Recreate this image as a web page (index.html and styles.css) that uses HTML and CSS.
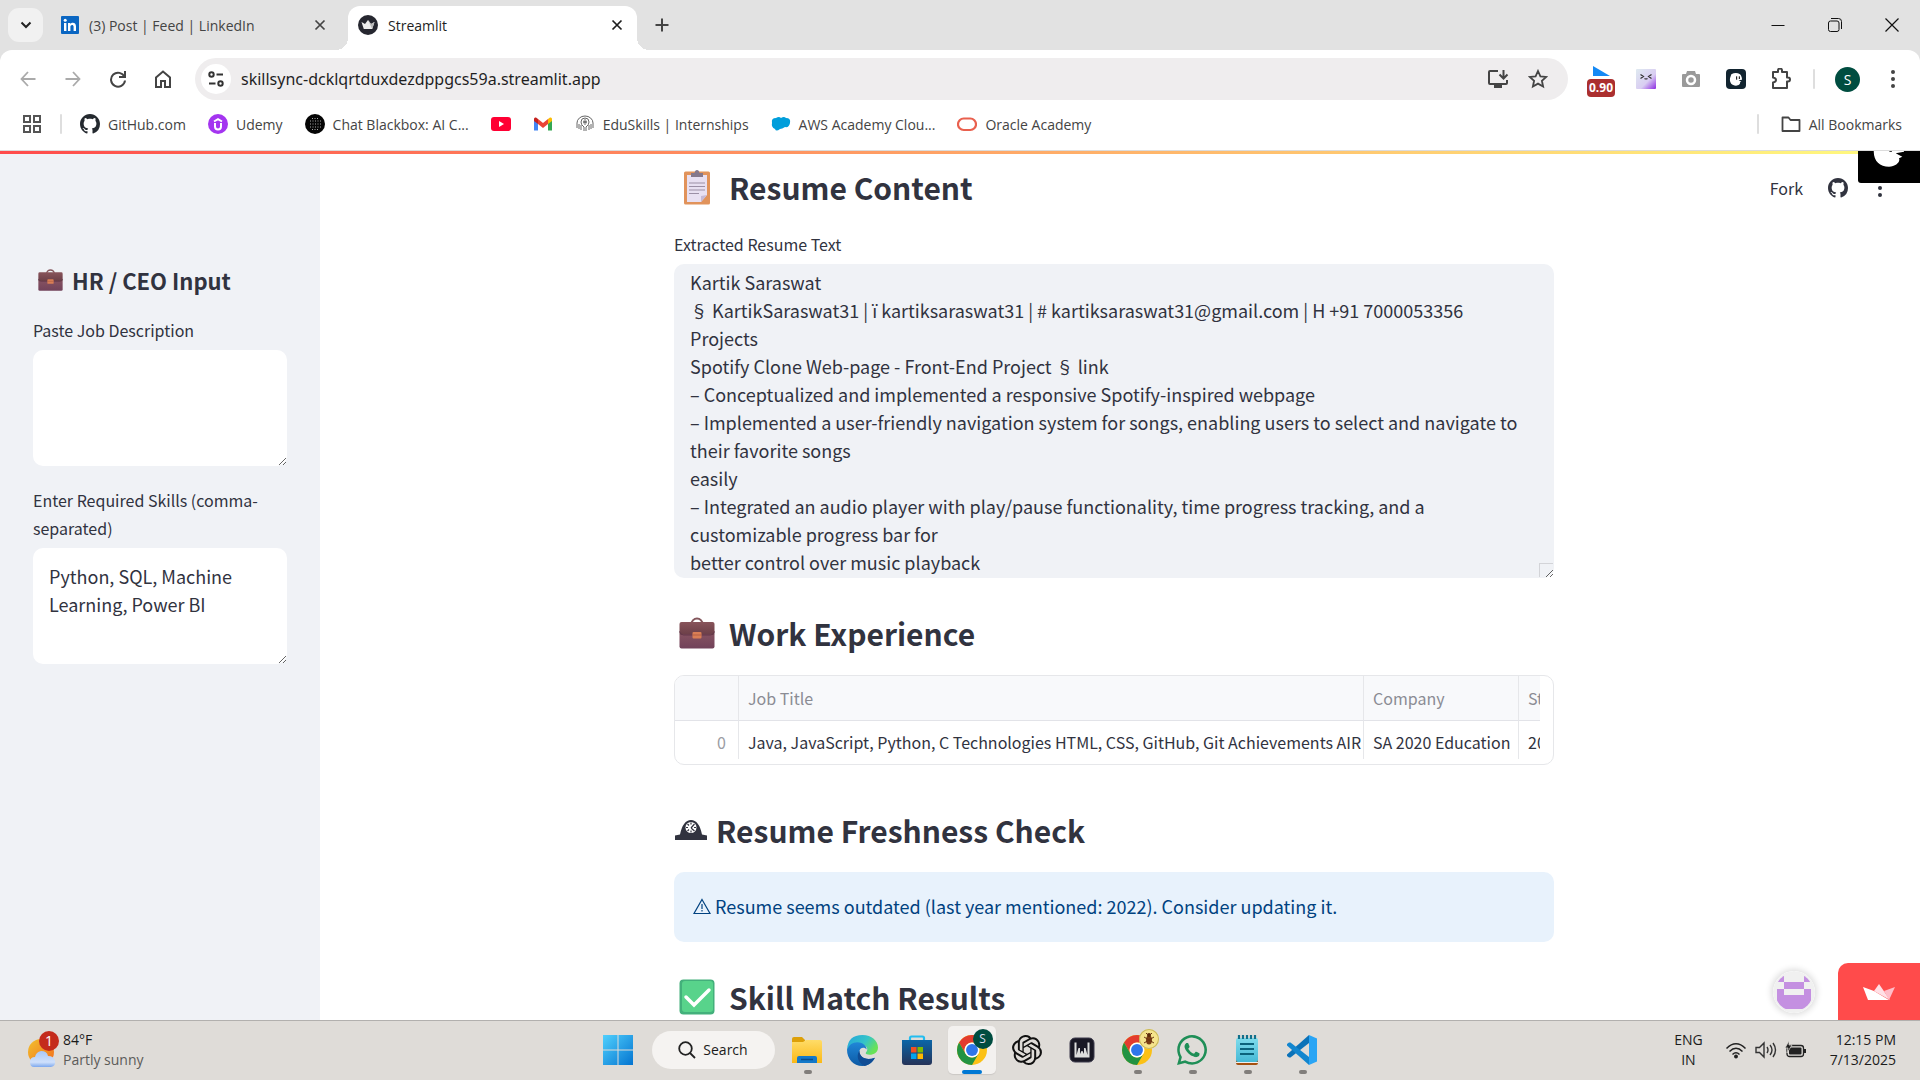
FILE: index.html
```html
<!DOCTYPE html>
<html lang="en">
<head>
<meta charset="utf-8">
<title>Streamlit</title>
<link rel="stylesheet" href="styles.css">
</head>
<body>
<svg class="defs" aria-hidden="true">
  <defs>
    <linearGradient id="case" x1="0" y1="0" x2="0" y2="1"><stop offset="0" stop-color="#88545a"/><stop offset=".45" stop-color="#6d4049"/><stop offset=".5" stop-color="#835060"/><stop offset="1" stop-color="#71425a"/></linearGradient>
    <linearGradient id="win" x1="0" y1="0" x2="1" y2="1"><stop offset="0" stop-color="#50d0fd"/><stop offset="1" stop-color="#0474d0"/></linearGradient>
    <linearGradient id="folder" x1="0" y1="0" x2="0" y2="1"><stop offset="0" stop-color="#ffdc68"/><stop offset="1" stop-color="#fbb916"/></linearGradient>
    <linearGradient id="edgeTop" x1="0" y1="0" x2="1" y2=".5"><stop offset="0" stop-color="#23a4dc"/><stop offset=".6" stop-color="#35c4c8"/><stop offset="1" stop-color="#68e257"/></linearGradient>
    <linearGradient id="edgeLow" x1="0" y1="0" x2="0" y2="1"><stop offset="0" stop-color="#2087d8"/><stop offset="1" stop-color="#0c59a4"/></linearGradient>
    <linearGradient id="bag" x1="0" y1="0" x2="0" y2="1"><stop offset="0" stop-color="#0b66a8"/><stop offset="1" stop-color="#253358"/></linearGradient>
    <linearGradient id="sun" x1="0" y1="0" x2="1" y2="1"><stop offset="0" stop-color="#f2c12e"/><stop offset="1" stop-color="#f26b1d"/></linearGradient>
    <linearGradient id="cloud" x1="0" y1="0" x2="0" y2="1"><stop offset="0" stop-color="#a8c8f8"/><stop offset=".7" stop-color="#cfe0fb"/><stop offset="1" stop-color="#7da8ee"/></linearGradient>
    <linearGradient id="face" x1="0" y1="0" x2="1" y2="1"><stop offset="0" stop-color="#dfeaf0"/><stop offset=".6" stop-color="#d9cdf2"/><stop offset="1" stop-color="#8d2be2"/></linearGradient>
    <linearGradient id="pad" x1="0" y1="0" x2="0" y2="1"><stop offset="0" stop-color="#7fdcec"/><stop offset="1" stop-color="#45b9d6"/></linearGradient>
    <symbol id="github" viewBox="0 0 16 16"><path d="M8 0C3.58 0 0 3.58 0 8c0 3.54 2.29 6.53 5.47 7.59.4.07.55-.17.55-.38 0-.19-.01-.82-.01-1.49-2.01.37-2.53-.49-2.69-.94-.09-.23-.48-.94-.82-1.13-.28-.15-.68-.52-.01-.53.63-.01 1.08.58 1.23.82.72 1.21 1.87.87 2.33.66.07-.52.28-.87.51-1.07-1.78-.2-3.64-.89-3.64-3.95 0-.87.31-1.59.82-2.15-.08-.2-.36-1.02.08-2.12 0 0 .67-.21 2.2.82.64-.18 1.32-.27 2-.27s1.36.09 2 .27c1.53-1.04 2.2-.82 2.2-.82.44 1.1.16 1.92.08 2.12.51.56.82 1.27.82 2.15 0 3.07-1.87 3.75-3.65 3.95.29.25.54.73.54 1.48 0 1.07-.01 1.93-.01 2.2 0 .21.15.46.55.38A8.01 8.01 0 0 0 16 8c0-4.42-3.58-8-8-8z"/></symbol>
    <symbol id="briefcase" viewBox="0 0 36 32"><path d="M12.500 7a5 5 0 0 1 11 0" fill="none" stroke="#84565c" stroke-width="2"/><rect x=".5" y="5" width="35" height="26.500" rx="2" fill="url(#case)"/><path d="M.5 14.500q1 3.500 4 3.500h27q3 0 4-3.500" fill="none" stroke="#63374a"/><rect x="13.500" y="15" width="9" height="6.500" rx="1" fill="#d97e55"/><path d="M13.500 18h9" stroke="#b55f45"/></symbol>
    <symbol id="chrome" viewBox="0 0 48 48"><circle cx="24" cy="24" r="24" fill="#fbc116"/><path d="M3.220 12A24 24 0 0 1 44.780 12H24a12 12 0 0 0-10.390 18z" fill="#e33b2e"/><path d="M3.220 12A24 24 0 0 0 24 48l10.390-18A12 12 0 0 1 13.610 30z" fill="#229342"/><circle cx="24" cy="24" r="12" fill="#fff"/><circle cx="24" cy="24" r="9.500" fill="#2f76ea"/></symbol>
    <symbol id="dots" viewBox="0 0 20 20"><circle cx="10" cy="3" r="2"/><circle cx="10" cy="10" r="2"/><circle cx="10" cy="17" r="2"/></symbol>
    <symbol id="cross" viewBox="0 0 12 12"><path d="M1.500 1.500l9 9m0-9l-9 9" fill="none" stroke="currentColor" stroke-width="1.700"/></symbol>
    <symbol id="bot" viewBox="0 0 24 24"><path d="M5 5q7-4 13 0c2 2 3 5 3 8l-5 1 4 2-2 1c1 2-2 5-6 5C6 22 2 18 3 11z" fill="#fff"/><path d="M13 8v5m4-5v4" stroke="#000" stroke-width="1.500"/></symbol>
  </defs>
</svg>

<header class="browser">
  <div class="tabstrip">
    <button class="tab-search" aria-label="Search tabs"><svg width="12" height="8" viewBox="0 0 12 8"><path d="M1.500 1.500L6 6l4.500-4.500" fill="none" stroke="#222" stroke-width="2"/></svg></button>
    <div class="tab">
      <svg width="18" height="18" viewBox="0 0 18 18"><rect width="18" height="18" rx="1" fill="#0a66c2"/><circle cx="4.200" cy="4.200" r="1.500" fill="#fff"/><path d="M3 7h2.400v8H3zM7 7h2.300v1.100C10.700 6 15 6.200 15 10.300V15h-2.400v-4.200c0-2.700-3.200-2.400-3.200 0V15H7z" fill="#fff"/></svg>
      <span class="tab-title">(3) Post | Feed | LinkedIn</span>
      <button class="tab-close" aria-label="Close tab"><svg width="12" height="12"><use href="#cross"/></svg></button>
    </div>
    <div class="tab tab-active">
      <svg width="20" height="20" viewBox="0 0 20 20"><circle cx="10" cy="10" r="10" fill="#262730"/><path d="M3.500 7l3.500 2L10 5l3 4 3.500-2-2.300 7H5.800z" fill="#eee"/><path d="M10 5l3 4 3.500-2-2.300 7z" fill="#bbb"/></svg>
      <span class="tab-title">Streamlit</span>
      <button class="tab-close" aria-label="Close tab"><svg width="12" height="12"><use href="#cross"/></svg></button>
    </div>
    <button class="new-tab" aria-label="New tab"><svg width="14" height="14" viewBox="0 0 14 14"><path d="M7 .5v13M.5 7h13" stroke="#444" stroke-width="2"/></svg></button>
    <div class="window-buttons">
      <button aria-label="Minimize"><svg width="14" height="14" viewBox="0 0 14 14"><path d="M.5 7.500h13" stroke="#111"/></svg></button>
      <button aria-label="Restore"><svg width="14" height="14" viewBox="0 0 14 14" fill="none" stroke="#111"><rect x=".5" y="3" width="10.500" height="10.500" rx="2"/><path d="M3 .5h7.500a3 3 0 0 1 3 3V11"/></svg></button>
      <button aria-label="Close"><svg width="14" height="14" viewBox="0 0 14 14"><path d="M.5.5l13 13m0-13l-13 13" stroke="#111" stroke-width="1.200"/></svg></button>
    </div>
  </div>

  <div class="toolbar">
    <button class="tool" aria-label="Back"><svg width="16" height="16" viewBox="0 0 16 16" fill="none" stroke="#aaa" stroke-width="1.800"><path d="M15.500 8H1.500M8 1L1.500 8 8 15"/></svg></button>
    <button class="tool" aria-label="Forward"><svg width="16" height="16" viewBox="0 0 16 16" fill="none" stroke="#aaa" stroke-width="1.800"><path d="M.5 8h14M8 1l6.500 7L8 15"/></svg></button>
    <button class="tool" aria-label="Reload"><svg width="18" height="18" viewBox="0 0 18 18" fill="none" stroke="#444" stroke-width="2"><path d="M15.500 7A7 7 0 1 0 16 10.500M16 1v6h-6"/></svg></button>
    <button class="tool" aria-label="Home"><svg width="18" height="18" viewBox="0 0 18 18" fill="none" stroke="#444" stroke-width="2"><path d="M2 7.500L9 1.500l7 6V17h-5v-6H7v6H2z"/></svg></button>
    <div class="address">
      <button class="site-info" aria-label="Site information"><svg width="16" height="16" viewBox="0 0 16 16" fill="none" stroke="#333" stroke-width="2"><circle cx="3.500" cy="3.500" r="2.200"/><path d="M8.500 3.500H15M1 12.500h6.500"/><circle cx="12.500" cy="12.500" r="2.200"/></svg></button>
      <input class="url" aria-label="Address" value="skillsync-dcklqrtduxdezdppgcs59a.streamlit.app">
      <button class="in-address" aria-label="Install app"><svg width="22" height="20" viewBox="0 0 22 20" fill="none" stroke="#444" stroke-width="2"><path d="M11 2H3q-1 0-1 1v11q0 1 1 1h16q1 0 1-1v-3M16.500 1v8m-4-3.500l4 4 4-4"/><path d="M7 17.500h8" stroke-width="3"/></svg></button>
      <button class="in-address" aria-label="Bookmark this page"><svg width="20" height="20" viewBox="0 0 20 20"><path d="M10 2l2.400 5.300 5.800.6-4.300 3.900 1.200 5.700L10 14.600l-5.100 2.900 1.200-5.700L1.800 7.900l5.800-.6z" fill="none" stroke="#444" stroke-width="1.800"/></svg></button>
    </div>
    <button class="tool badge-host" aria-label="Playback speed"><svg width="18" height="18" viewBox="0 0 18 18"><path d="M1 0l17 10H1z" fill="#1489f5"/></svg><span class="speed">0.90</span></button>
    <button class="tool" aria-label="Extension"><svg width="20" height="20" viewBox="0 0 20 20"><rect width="20" height="20" rx="1" fill="url(#face)"/><path d="M4.500 5.500l3 2-3 2M15.500 5.500l-3 2 3 2M8.500 9.500q1.500 1 3 0" fill="none" stroke="#333" stroke-width="1.200"/></svg></button>
    <button class="tool" aria-label="Screenshot"><svg width="20" height="20" viewBox="0 0 20 20"><path d="M2 5h3l1-3h8l1 3h3q1 0 1 1v11q0 1-1 1H2q-1 0-1-1V6q0-1 1-1z" fill="#9a9a9a"/><circle cx="10" cy="11" r="4" fill="none" stroke="#fff" stroke-width="2.500"/></svg></button>
    <button class="tool" aria-label="Assistant"><svg width="20" height="20" viewBox="0 0 20 20"><rect width="20" height="20" rx="4" fill="#122430"/><svg x="2" y="2" width="16" height="16"><use href="#bot"/></svg></svg></button>
    <button class="tool" aria-label="Extensions"><svg width="22" height="22" viewBox="0 0 22 22"><path d="M3 4h5V2.500a2 2 0 0 1 4 0V4h5v5.500h1a2 2 0 0 1 0 4h-1V20H3v-5.500q3-.5 3-2.500T3 9.500z" fill="none" stroke="#444" stroke-width="2" stroke-linejoin="round"/></svg></button>
    <span class="rule"></span>
    <button class="tool" aria-label="Profile"><span class="profile">S</span></button>
    <button class="tool" aria-label="Menu"><svg width="20" height="20" fill="#444"><use href="#dots"/></svg></button>
  </div>

  <nav class="bookmarks">
    <button class="apps" aria-label="Apps"><svg width="18" height="18" viewBox="0 0 18 18" fill="none" stroke="#555" stroke-width="2"><path d="M1 1h6v6H1zM11 1h6v6h-6zM1 11h6v6H1zM11 11h6v6h-6z"/></svg></button>
    <span class="rule"></span>
    <a href="#"><svg width="20" height="20" fill="#24292f"><use href="#github"/></svg>GitHub.com</a>
    <a href="#"><svg width="20" height="20" viewBox="0 0 20 20"><circle cx="10" cy="10" r="10" fill="#a435f0"/><path d="M6 7.500l4-2.300 4 2.300M7 9v3.500q0 3 3 3t3-3V9" fill="none" stroke="#fff" stroke-width="2"/></svg>Udemy</a>
    <a href="#"><svg width="20" height="20" viewBox="0 0 20 20"><circle cx="10" cy="10" r="10" fill="#050505"/><path d="M5 7h11M5 10h11M5 13h11M7 4.500h7M7 15.500h7" stroke="#aaa" stroke-dasharray="1 1.500"/></svg>Chat Blackbox: AI C...</a>
    <a href="#" aria-label="YouTube"><svg width="20" height="20" viewBox="0 0 20 20"><rect y="3" width="20" height="14" rx="3" fill="#ff0033"/><path d="M8 7l5 3-5 3z" fill="#fff"/></svg></a>
    <a href="#" aria-label="Gmail"><svg width="20" height="20" viewBox="0 0 20 20"><path d="M1 5v11.500h4V8z" fill="#4285f4"/><path d="M19 5v11.500h-4V8z" fill="#34a853"/><path d="M5 5l5 4 5-4v5l-5 4-5-4z" fill="#ea4335"/><path d="M1 5q0-2 2-1.500L5 5v5L1 7z" fill="#c5221f"/><path d="M19 5q0-2-2-1.500L15 5v5l4-3z" fill="#fbbc04"/></svg></a>
    <a href="#"><svg width="20" height="20" viewBox="0 0 20 20" fill="none" stroke="#666"><path d="M2 14V9a8 7 0 0 1 16 0v5M4 15V10m12 5v-5M6 16v-5m8 5v-5M9 17v-4q-3-2-3-5 0-4 4-4t4 4q0 3-3 5v4M10 5v6M8 7l4 2m0-2L8 9"/></svg>EduSkills | Internships</a>
    <a href="#"><svg width="20" height="20" viewBox="0 0 20 20"><path d="M1 9q-1-5 4-5 3-2 5 0 3-2 5 0 5 0 4 5-1 5-5 4-3 2-5 2-4 3-5 0-4-2-3-6z" fill="#009edb"/></svg>AWS Academy Clou...</a>
    <a href="#"><svg width="20" height="20" viewBox="0 0 20 20"><rect x="1" y="4.500" width="18" height="11.500" rx="5.700" fill="none" stroke="#e9604e" stroke-width="2.200"/></svg>Oracle Academy</a>
    <span class="rule rule-end"></span>
    <a href="#"><svg width="20" height="20" viewBox="0 0 20 20"><path d="M1.500 3.500h6l2 2.500h9v11h-17z" fill="none" stroke="#444" stroke-width="1.800" stroke-linejoin="round"/></svg>All Bookmarks</a>
  </nav>
</header>

<div class="page">
  <div class="stripe"></div>
  <aside class="sidebar">
    <h2 class="side-title"><svg class="case-small"><use href="#briefcase"/></svg>HR / CEO Input</h2>
    <div class="field">
      <label for="job">Paste Job Description</label>
      <textarea id="job" class="side-area"></textarea>
    </div>
    <div class="field">
      <label for="skills">Enter Required Skills (comma-separated)</label>
      <textarea id="skills" class="side-area">Python, SQL, Machine Learning, Power BI</textarea>
    </div>
  </aside>

  <main class="main">
    <div class="content">
      <section class="resume">
        <h2 class="title"><svg class="emoji" viewBox="0 0 36 36"><rect x="5" y="2.500" width="26" height="33" rx="1.500" fill="#e1935b"/><path d="M8 6h20v20l-6 7H8z" fill="#e8e0f2"/><path d="M22 33v-6l6-1z" fill="#c6b9d5"/><path d="M12 8V4h3.500q.5-3 2.500-3t2.500 3H24v4z" fill="#85788c"/><path d="M10 14h16M10 17.500h16M10 21h16M10 24.500h10" stroke="#9b8fa6" stroke-width="1.200"/></svg>Resume Content</h2>
        <div class="field">
          <label for="resume">Extracted Resume Text</label>
          <div class="area-wrap">
          <textarea id="resume" class="resume-area">Kartik Saraswat
§ KartikSaraswat31 | ï kartiksaraswat31 | # kartiksaraswat31@gmail.com | H +91 7000053356
Projects
Spotify Clone Web-page - Front-End Project § link
– Conceptualized and implemented a responsive Spotify-inspired webpage
– Implemented a user-friendly navigation system for songs, enabling users to select and navigate to their favorite songs
easily
– Integrated an audio player with play/pause functionality, time progress tracking, and a customizable progress bar for
better control over music playback</textarea>
          </div>
        </div>
      </section>

      <section class="work">
        <h2 class="title"><svg class="emoji"><use href="#briefcase"/></svg>Work Experience</h2>
        <div class="frame">
          <div class="clip">
            <table class="grid">
              <colgroup><col class="col-index"><col><col class="col-company"><col class="col-start"></colgroup>
              <thead><tr><th></th><th>Job Title</th><th>Company</th><th>Start</th></tr></thead>
              <tbody><tr><td class="index">0</td><td>Java, JavaScript, Python, C Technologies HTML, CSS, GitHub, Git Achievements AIR 760</td><td>SA 2020 Education</td><td>2020</td></tr></tbody>
            </table>
          </div>
        </div>
      </section>

      <section class="fresh">
        <h2 class="title title-tight"><svg class="clock" viewBox="0 0 32 20"><path d="M0 20v-4.500l5-1Q8 0 16 0t11 14.500l5 1V20z" fill="#31333f"/><circle cx="16" cy="7.500" r="5.500" fill="#fff"/><path d="M16 2.500v2m0 8v-2M11 7.500h2m8 0h-2M12.500 4l1.500 1.500M19.500 4L16 8m-3.500 3l1.500-1.500m5.500 1.500L16 8" stroke="#31333f" stroke-width="1.200"/></svg>Resume Freshness Check</h2>
        <div class="alert"><svg width="18" height="17" viewBox="0 0 18 17" fill="none" stroke="#004280" stroke-width="1.200"><path d="M9 1.500L17 15.500H1zM9 6v5m0 1v1.500"/></svg>Resume seems outdated (last year mentioned: 2022). Consider updating it.</div>
      </section>

      <section>
        <h2 class="title"><svg class="emoji" viewBox="0 0 36 36"><rect x=".5" y=".5" width="35" height="35" rx="4" fill="#43b07b"/><rect x="3" y="2" width="31" height="31" rx="3" fill="#58d38b"/><path d="M7 18l8 8 15-15" fill="none" stroke="#fff" stroke-width="3.500" stroke-linecap="round"/></svg>Skill Match Results</h2>
      </section>
    </div>
  </main>

  <div class="page-menu">
    <a href="#">Fork</a>
    <a href="#" aria-label="GitHub"><svg width="20" height="20" fill="#31333f"><use href="#github"/></svg></a>
    <button aria-label="App menu"><svg width="20" height="20" fill="#31333f"><use href="#dots"/></svg></button>
  </div>
  <div class="corner-bot"><svg width="40" height="40"><use href="#bot"/></svg></div>
  <div class="host-badges">
    <svg class="creator" width="42" height="42" viewBox="0 0 42 42"><defs><clipPath id="round"><circle cx="21" cy="21" r="19"/></clipPath></defs><circle cx="21" cy="21" r="21" fill="#f0f0f0"/><g clip-path="url(#round)" fill="#c490e1"><path d="M4 4h7v7H4zM31 4h7v7h-7zM11 11h20v7H11zM4 18h7v6h20v-6h7v20H4z"/></g></svg>
    <a class="crown" href="#" aria-label="Hosted with Streamlit"><svg width="34" height="18" viewBox="0 0 34 18"><path d="M1 4l11 4 15 9H6z" fill="#fff"/><path d="M12 8l5-7 11 16z" fill="#ffe0e6"/><path d="M22 8l11-4-6 13z" fill="#ffbdc8"/></svg></a>
  </div>
</div>

<footer class="taskbar">
  <div class="weather">
    <svg width="34" height="38" viewBox="0 0 34 38"><circle cx="14" cy="22" r="13" fill="url(#sun)"/><path d="M7 37q-4 0-4-5t5-5q1-5 6-6 6 0 7 5 6 0 7 5t-4 6z" fill="url(#cloud)"/><circle cx="22" cy="11" r="10" fill="#c42b1c"/><text x="22" y="16" class="count">1</text></svg>
    <div><div>84°F</div><div class="muted">Partly sunny</div></div>
  </div>
  <div class="dock">
    <button class="app" aria-label="Start"><svg width="30" height="30" viewBox="0 0 30 30"><path d="M0 0h14.500v14.500H0zM15.500 0H30v14.500H15.500zM0 15.500h14.500V30H0zM15.500 15.500H30V30H15.500z" fill="url(#win)"/></svg></button>
    <button class="search"><svg width="18" height="18" viewBox="0 0 18 18" fill="none" stroke="#222" stroke-width="1.800"><circle cx="7.500" cy="7.500" r="6.300"/><path d="M12 12l5 5"/></svg>Search</button>
    <button class="app running" aria-label="File Explorer"><svg width="30" height="30" viewBox="0 0 30 30"><path d="M0 4q0-2 2-2h8l3 3v5H0z" fill="#dda009"/><path d="M0 7h11l3-2h14q2 0 2 2v21H0z" fill="url(#folder)"/><path d="M5 28v-5q0-2 2-2h16q2 0 2 2v5z" fill="#1479c9"/><path d="M9 24.500h12" stroke="#0b4e8c" stroke-width="1.500"/></svg></button>
    <button class="app" aria-label="Edge"><svg width="31" height="31" viewBox="0 0 30 30"><path d="M0 14Q1 0 15 0c9 0 15 6 15 12 0 5-4 7-8 7-5 0-4-2-3-3q2-3-2-6Q10 5 0 14z" fill="url(#edgeTop)"/><path d="M0 14Q3 7 10 7c6 0 9 4 9 7-2-3-7-2-7 2 0 6 7 9 15 6-2 4-6 8-12 8C6 30 0 23 0 14z" fill="url(#edgeLow)"/><path d="M12 15q-5 9 5 15c4-1 8-4 10-8-8 3-15 0-15-7z" fill="#104c94"/></svg></button>
    <button class="app" aria-label="Store"><svg width="30" height="30" viewBox="0 0 30 30"><path d="M8 7V3q0-1.500 1.500-1.500h11Q22 1.500 22 3v4" fill="none" stroke="#23bdf0" stroke-width="2.200"/><path d="M0 5h30v22q0 3-3 3H3q-3 0-3-3z" fill="url(#bag)"/><path d="M9 12h5.500v5.500H9z" fill="#f25022"/><path d="M15.500 12H21v5.500h-5.500z" fill="#7fba00"/><path d="M9 18.500h5.500V24H9z" fill="#00a4ef"/><path d="M15.500 18.500H21V24h-5.500z" fill="#ffb900"/></svg></button>
    <button class="app running current" aria-label="Chrome"><svg width="30" height="30"><use href="#chrome"/></svg><span class="who">S</span></button>
    <button class="app" aria-label="ChatGPT"><svg width="30" height="30" viewBox="0 0 24 24" fill="#111"><path d="M22.280 9.820a5.980 5.980 0 0 0-.51-4.910 6.050 6.050 0 0 0-6.510-2.900A6.070 6.070 0 0 0 4.980 4.180a5.980 5.980 0 0 0-4 2.900 6.050 6.050 0 0 0 .74 7.100 5.980 5.980 0 0 0 .51 4.910 6.050 6.050 0 0 0 6.510 2.900A5.980 5.980 0 0 0 13.260 24a6.060 6.060 0 0 0 5.770-4.210 5.990 5.990 0 0 0 4-2.900 6.060 6.060 0 0 0-.75-7.070zm-9.020 12.610a4.480 4.480 0 0 1-2.880-1.040l.14-.08 4.780-2.760a.8.8 0 0 0 .39-.68v-6.740l2.020 1.170a.07.07 0 0 1 .04.05v5.580a4.500 4.500 0 0 1-4.490 4.500zm-9.660-4.130a4.470 4.470 0 0 1-.54-3.010l.14.090 4.780 2.760a.77.770 0 0 0 .78 0l5.840-3.370v2.330a.08.08 0 0 1-.03.06L9.740 19.950a4.500 4.500 0 0 1-6.140-1.650zM2.340 7.900a4.490 4.490 0 0 1 2.370-1.970v5.680a.77.770 0 0 0 .39.680l5.810 3.350-2.020 1.170a.08.08 0 0 1-.07 0l-4.830-2.790A4.500 4.500 0 0 1 2.340 7.900zm16.600 3.860L13.100 8.360l2.020-1.160a.08.08 0 0 1 .07 0l4.830 2.790a4.490 4.490 0 0 1-.68 8.100v-5.680a.79.790 0 0 0-.41-.67zm2.010-3.020l-.14-.09-4.770-2.780a.78.780 0 0 0-.79 0L9.410 9.230V6.900a.07.07 0 0 1 .03-.06l4.830-2.790a4.500 4.500 0 0 1 6.680 4.660zM8.310 12.860l-2.020-1.160a.08.08 0 0 1-.04-.06V6.070a4.500 4.500 0 0 1 7.380-3.450l-.14.080L8.700 5.460a.8.8 0 0 0-.39.680zm1.100-2.370L12.010 9l2.610 1.500v3l-2.600 1.500-2.610-1.500z"/></svg></button>
    <button class="app" aria-label="Wave"><svg width="26" height="26" viewBox="0 0 26 26"><rect x="1" y="1" width="24" height="24" rx="5" fill="#191825" stroke="#3d3b4c"/><path d="M5.500 5.500h2V18l2-7h1.500v6l1.500-3h1l1.500 3v-6h1.500l2 7V5.500h2V20.500h-15z" fill="#ddd"/></svg></button>
    <button class="app running" aria-label="Chrome, second profile"><svg width="30" height="30"><use href="#chrome"/></svg><span class="who who-bug"><svg width="12" height="14" viewBox="0 0 12 14"><ellipse cx="6" cy="8" rx="3" ry="4.500" fill="#7a3d14"/><circle cx="6" cy="3" r="2" fill="#5b2b0c"/><path d="M1 5l10 6M11 5L1 11M3 1l2 2m4-2L7 3" stroke="#6d3512"/></svg></span></button>
    <button class="app running" aria-label="WhatsApp"><svg width="30" height="30" viewBox="0 0 24 24" fill="#1f8f57"><path d="M17.470 14.380c-.3-.15-1.760-.87-2.030-.97-.27-.1-.47-.15-.67.150-.2.300-.77.970-.94 1.160-.17.200-.35.220-.64.070-.3-.15-1.260-.46-2.390-1.480-.88-.79-1.480-1.760-1.650-2.060-.17-.3-.02-.46.130-.6.130-.14.300-.35.450-.52.150-.18.200-.3.300-.5.100-.2.050-.37-.03-.52-.07-.15-.67-1.610-.91-2.210-.24-.58-.49-.5-.67-.51h-.57c-.2 0-.52.070-.79.370-.27.300-1.040 1.020-1.040 2.480s1.070 2.880 1.210 3.070c.15.200 2.100 3.200 5.080 4.490 2.980 1.290 2.980.86 3.520.8.540-.05 1.760-.72 2-1.410.25-.7.250-1.290.18-1.410-.08-.13-.27-.2-.57-.35z"/><path d="M12.050 0C5.500 0 .16 5.340.16 11.890c0 2.100.55 4.140 1.590 5.950L.06 24l6.300-1.650a11.880 11.880 0 0 0 5.690 1.450C18.600 23.800 24 18.400 24 11.890 24 5.400 18.600 0 12.050 0zm0 21.800a9.870 9.870 0 0 1-5.030-1.380l-.36-.21-3.740.98 1-3.650-.24-.37A9.860 9.860 0 1 1 12.050 21.800z"/></svg></button>
    <button class="app running" aria-label="Notepad"><svg width="24" height="30" viewBox="0 0 24 30"><path d="M1 24h22v4q0 2-2 2H3q-2 0-2-2z" fill="#a5500f"/><rect x="1" y="3" width="22" height="24" rx="2" fill="url(#pad)"/><path d="M1 27.500h22" stroke="#eee"/><path d="M4 0v4m4-4v4m4-4v4m4-4v4m4-4v4" stroke="#12708b" stroke-width="2.200"/><path d="M5 9h14M5 14h14M5 19h14" stroke="#0b637c" stroke-width="2"/></svg></button>
    <button class="app running" aria-label="Visual Studio Code"><svg width="30" height="30" viewBox="0 0 30 30"><path d="M22 0L0 19.500v1.500l2 1.500h1.500L22 8z" fill="#0b72b8"/><path d="M22 30L0 10.500V9l2-1.500h1.500L22 22z" fill="#1286cf"/><path d="M22 0l8 3.500v23L22 30z" fill="#2aa5f5"/></svg></button>
  </div>
  <div class="tray">
    <div class="lang">ENG<br>IN</div>
    <svg width="22" height="18" viewBox="0 0 22 18" fill="none" stroke="#222" stroke-width="1.500"><path d="M1.500 7.500q9.500-9.500 19 0M4.500 10.500q6.500-6.500 13 0M7.500 13.500q3.500-3.500 7 0"/><circle cx="11" cy="15.500" r="1.200" fill="#222"/></svg>
    <svg width="22" height="18" viewBox="0 0 22 18" fill="none" stroke="#333" stroke-width="1.400"><path d="M1 6.500h3.500L9 2v14l-4.500-4.500H1zM12 6q2 3 0 6M15 4q4 5 0 10M18 2q5 7 0 14"/></svg>
    <svg width="22" height="18" viewBox="0 0 22 18"><rect x="2" y="4.500" width="16.500" height="11" rx="2.500" fill="none" stroke="#222" stroke-width="1.300"/><rect x="4" y="6.500" width="12.500" height="7" rx="1" fill="#222"/><path d="M19 8h2v4h-2z" fill="#222"/><path d="M4 0L0 7h3l-1 5 5-8H4z" fill="#222" stroke="#dfdcd8" stroke-width=".7"/></svg>
    <div class="time">12:15 PM<br>7/13/2025</div>
  </div>
</footer>
</body>
</html>
```
FILE: styles.css
```css
* { box-sizing: border-box; }
body {
  margin: 0;
  height: 100vh;
  display: flex;
  flex-direction: column;
  overflow: hidden;
  background: #fff;
  color: #31333f;
  font-family: "Open Sans", "Noto Sans", sans-serif;
  font-size: 14px;
}
button {
  border: 0;
  padding: 0;
  background: none;
  color: inherit;
  font: inherit;
  display: flex;
  align-items: center;
  justify-content: center;
}
a { color: inherit; text-decoration: none; }
svg { flex: none; display: block; }
.defs { position: absolute; width: 0; height: 0; }

/* Browser chrome */
.browser { flex: none; background: #e2e2e2; color: #444; border-bottom: 1px solid #dcdcdc; }
.tabstrip { display: flex; align-items: center; height: 50px; padding-left: 8px; }
.tab-search { width: 35px; height: 34px; border-radius: 11px; background: #f1f1f1; }
.tab { display: flex; align-items: center; gap: 10px; height: 44px; width: 297px; padding: 0 10px 0 18px; }
.tab-title { flex: 1; white-space: nowrap; }
.tab-close { width: 20px; height: 20px; color: #444; }
.tab-active {
  position: relative;
  align-self: flex-end;
  margin-left: 8px;
  width: 289px;
  padding: 0 10px 6px;
  background: #fff;
  border-radius: 12px 12px 0 0;
  color: #1f1f1f;
}
.tab-active .tab-close { color: #1f1f1f; }
.tab-active::before,
.tab-active::after { content: ""; position: absolute; bottom: 0; width: 12px; height: 12px; }
.tab-active::before { right: 100%; background: radial-gradient(circle at 0 0, #e2e2e2 12px, #fff 12px); }
.tab-active::after { left: 100%; background: radial-gradient(circle at 100% 0, #e2e2e2 12px, #fff 12px); }
.new-tab { width: 50px; height: 34px; }
.window-buttons { display: flex; margin-left: auto; }
.window-buttons button { width: 57px; height: 50px; }

.toolbar { display: flex; align-items: center; padding: 8px 5px 0; background: #fff; border-radius: 12px 12px 0 0; }
.tool { width: 45px; height: 42px; flex: none; }
.address { flex: 1; display: flex; align-items: center; height: 42px; margin: 0 10px; padding: 0 10px 0 6px; border-radius: 21px; background: #efedee; }
.site-info { width: 30px; height: 30px; border-radius: 15px; background: #fff; }
.url { flex: 1; min-width: 0; border: 0; padding: 0 0 0 10px; background: none; color: #1f1f1f; font-family: "Noto Sans", sans-serif; font-size: 16px; outline: 0; }
.in-address { width: 40px; height: 40px; }
.badge-host { position: relative; }
.badge-host svg { margin-bottom: 8px; }
.speed { position: absolute; left: 9px; top: 21px; width: 28px; height: 18px; border-radius: 4px; background: #ab2f2f; color: #fff; font-size: 12px; line-height: 18px; font-weight: 700; text-align: center; }
.rule { width: 2px; height: 20px; margin: 0 10px; background: #dedede; border-radius: 1px; }
.profile { width: 25px; height: 25px; border-radius: 50%; background: #004d40; color: #fff; font-size: 14px; line-height: 25px; }

.bookmarks { display: flex; align-items: center; gap: 22px; height: 50px; padding: 0 18px 2px 23px; background: #fff; }
.bookmarks a { display: flex; align-items: center; gap: 8px; white-space: nowrap; }
.bookmarks .rule { margin: 0 -4px 0 -3px; }
.bookmarks .rule-end { margin: 0 0 0 auto; }

/* App page */
.page { position: relative; flex: 1; min-height: 0; display: flex; overflow: hidden; background: #fff; font-family: "Noto Sans CJK SC", "Noto Sans", sans-serif; font-size: 16px; line-height: 28px; }
.stripe { position: absolute; inset: 0 0 auto; height: 3px; z-index: 1; background: linear-gradient(90deg, #ff4b4b, #fffd80); }
.sidebar { flex: none; width: 320px; padding: 113px 33px 0; background: #f0f2f6; }
.side-title { display: flex; align-items: center; gap: 9px; margin: 0 0 20px; padding-left: 5px; font-size: 22px; line-height: 32px; font-weight: 600; white-space: nowrap; }
.case-small { width: 25px; height: 24px; }
.field { display: flex; flex-direction: column; gap: 6px; }
.field + .field { margin-top: 20px; }
textarea { display: block; width: 100%; border: 0; border-radius: 10px; outline: 0; color: inherit; font: inherit; font-size: 18px; line-height: 28px; overflow: hidden; resize: vertical; font-feature-settings: "palt"; }
.side-area { height: 116px; padding: 14px 16px; background: #fff; }

.main { flex: 1; min-width: 0; padding: 14px 12px 0 0; }
.content { max-width: 880px; margin: 0 auto; }
.title { display: flex; align-items: center; gap: 14px; margin: 0; padding-left: 5px; font-size: 30px; line-height: 44px; font-weight: 600; white-space: nowrap; }
.title-tight { gap: 9px; padding-left: 1px; }
.emoji { width: 36px; height: 36px; }
.clock { width: 32px; height: 20px; }
.resume .field { margin-top: 21px; }
.area-wrap { position: relative; }
.area-wrap::after { content: ""; position: absolute; right: 1px; bottom: 1px; width: 13px; height: 13px; border: solid #d3d4d8; border-width: 1px 0 0 1px; pointer-events: none; }
.resume-area { height: 314px; padding: 4px 32px 0 16px; background: #f0f2f6; }
.work { margin-top: 33px; }
.frame { margin-top: 20px; padding: 0 13px 5px 0; border: 1px solid #e6e7ea; border-radius: 10px; overflow: hidden; }
.clip { overflow: hidden; }
.grid { width: 920px; table-layout: fixed; border-collapse: separate; border-spacing: 0; }
.col-index { width: 64px; }
.col-company { width: 155px; }
.col-start { width: 76px; }
.grid th, .grid td { padding: 0 9px; border-right: 1px solid #e6e7ea; text-align: left; font-weight: 400; white-space: nowrap; overflow: hidden; }
.grid th { height: 45px; border-bottom: 1px solid #e2e3e8; background: #f8f9fb; color: #8b8c94; }
.grid td { height: 38px; padding-top: 3px; }
.grid .index { padding-right: 12px; text-align: right; color: #9b9ca3; }
.fresh { margin: 43px 0 33px; }
.alert { display: flex; align-items: center; gap: 4px; height: 70px; margin-top: 20px; padding: 0 19px 2px; border-radius: 10px; background: #e8f2fc; color: #004280; font-size: 18px; }
.page-menu { position: absolute; top: 23px; right: 30px; display: flex; align-items: center; gap: 22px; }
.page-menu a:first-child { margin-right: 3px; }
.corner-bot { position: absolute; top: 0; right: 0; z-index: 2; width: 62px; height: 32px; display: flex; justify-content: center; align-items: flex-end; padding-bottom: 13px; overflow: hidden; background: #000; border-radius: 0 0 0 3px; }
.host-badges { position: absolute; right: 0; bottom: 0; display: flex; align-items: center; gap: 23px; }
.creator { border-radius: 50%; box-shadow: 0 0 6px 2px #ddd; }
.crown { display: flex; align-items: center; justify-content: center; width: 82px; height: 57px; border-radius: 10px 0 0 0; background: #ff4b4b; }

/* Taskbar */
.taskbar { flex: none; display: grid; grid-template-columns: 1fr auto 1fr; align-items: center; height: 60px; padding-bottom: 2px; border-top: 1px solid #b2b0ae; background: #dfdcd8; color: #1b1b1b; line-height: 20px; }
.weather { display: flex; gap: 2px; padding-left: 27px; }
.count { fill: #fff; font-size: 14px; text-anchor: middle; }
.muted { color: #5c5b59; }
.dock { display: flex; align-items: center; }
.app { position: relative; width: 55px; height: 58px; }
.search { gap: 7px; width: 123px; height: 38px; margin: 0 5px 0 6px; border-radius: 19px; background: #f5f3f1; }
.running::after { content: ""; position: absolute; left: 24px; bottom: 5px; width: 8px; height: 4px; border-radius: 2px; background: #817e7b; }
.current { width: 48px; height: 48px; margin: 0 4px 0 3px; border-radius: 5px; background: #f3f1ef; box-shadow: 0 1px 1px #cbc8c5; }
.current::after { left: 14px; bottom: 0; width: 20px; background: #0078d4; }
.who { position: absolute; left: 25px; top: 3px; width: 20px; height: 20px; border-radius: 50%; background: #004d40; color: #dde; font-size: 12px; line-height: 20px; }
.app:not(.current) .who { left: 29px; top: 8px; }
.who-bug { display: flex; align-items: center; justify-content: center; background: #f5e48c; box-shadow: inset 0 0 0 1px #c8b75a; }
.tray { display: flex; align-items: center; justify-content: flex-end; gap: 8px; padding-right: 24px; }
.lang { margin-right: 14px; text-align: center; }
.time { margin-left: 15px; text-align: right; }
```
